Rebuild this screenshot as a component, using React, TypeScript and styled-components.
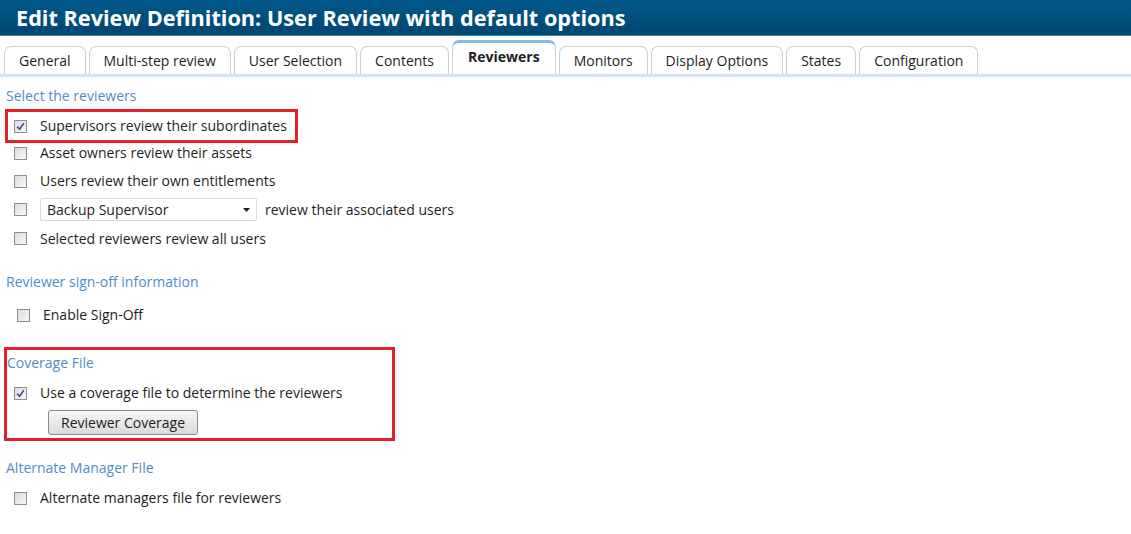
import styled, { createGlobalStyle } from 'styled-components'

const GlobalStyle = createGlobalStyle`
  html, body {
    margin: 0;
    padding: 0;
    background: #ffffff;
  }
  body {
    font-family: 'Open Sans', 'Liberation Sans', Arial, sans-serif;
    font-size: 14px;
    color: #1e1e1e;
  }
  * { box-sizing: border-box; }
`

const tabs = [
  'General',
  'Multi-step review',
  'User Selection',
  'Contents',
  'Reviewers',
  'Monitors',
  'Display Options',
  'States',
  'Configuration',
]

export default function App() {
  return (
    <Wrapper>
      <GlobalStyle />
      <Header>
        <Title>Edit Review Definition: User Review with default options</Title>
      </Header>

      <TabBar>
        {tabs.map((t) => (
          <Tab key={t} $active={t === 'Reviewers'}>
            {t}
          </Tab>
        ))}
      </TabBar>

      <Content>
        <Heading $top={9}>Select the reviewers</Heading>
        <Highlight $top={3} $width={293}>
          <Row $indent={6}>
            <Checkbox checked />
            <Label>Supervisors review their subordinates</Label>
          </Row>
        </Highlight>
        <Row $indent={8}>
          <Checkbox />
          <Label>Asset owners review their assets</Label>
        </Row>
        <Row $indent={8}>
          <Checkbox />
          <Label>Users review their own entitlements</Label>
        </Row>
        <Row $indent={8} $height={29}>
          <Checkbox />
          <Select>
            <span>Backup Supervisor</span>
            <Caret />
          </Select>
          <Label>review their associated users</Label>
        </Row>
        <Row $indent={8} $height={29}>
          <Checkbox />
          <Label>Selected reviewers review all users</Label>
        </Row>

        <Heading $top={19}>Reviewer sign-off information</Heading>
        <Row $indent={11} $top={9}>
          <Checkbox />
          <Label>Enable Sign-Off</Label>
        </Row>

        <Highlight $top={18} $width={391} $shift={-2}>
          <Heading $top={3}>Coverage File</Heading>
          <Row $indent={7} $top={6}>
            <Checkbox checked />
            <Label>Use a coverage file to determine the reviewers</Label>
          </Row>
          <ButtonRow>
            <Button>Reviewer Coverage</Button>
          </ButtonRow>
        </Highlight>

        <Heading $top={21}>Alternate Manager File</Heading>
        <Row $indent={8} $top={6}>
          <Checkbox />
          <Label>Alternate managers file for reviewers</Label>
        </Row>
      </Content>
    </Wrapper>
  )
}

function Checkbox({ checked = false }: { checked?: boolean }) {
  return (
    <Box>
      {checked && (
        <svg width="9" height="9" viewBox="0 0 9 9">
          <path d="M1.2 4.6 L3.6 7.2 L7.8 1.2" fill="none" stroke="#3d4f9a" strokeWidth="1.6" />
        </svg>
      )}
    </Box>
  )
}

function Caret() {
  return (
    <svg width="7" height="4" viewBox="0 0 7 4">
      <path d="M0 0 H7 L3.5 4 Z" fill="#222" />
    </svg>
  )
}

const Wrapper = styled.div`
  width: 1131px;
  min-height: 534px;
`

const Header = styled.div`
  height: 36px;
  padding-left: 16px;
  display: flex;
  align-items: center;
  background: linear-gradient(#00598b, #004670);
  border-bottom: 1px solid #2a93b8;
`

const Title = styled.h1`
  margin: 0;
  font-size: 21.7px;
  font-weight: 700;
  color: #ffffff;
  line-height: 28px;
  letter-spacing: 0;
`

const TabBar = styled.div`
  display: flex;
  align-items: flex-end;
  gap: 3px;
  height: 41px;
  padding-left: 4px;
  border-bottom: 3px solid #d4e4f4;
`

const Tab = styled.div<{ $active?: boolean }>`
  height: ${(p) => (p.$active ? 34 : 28)}px;
  padding: 0 14px;
  display: flex;
  align-items: center;
  justify-content: center;
  border: 1px solid #cfcfcf;
  border-bottom: none;
  border-radius: 7px 7px 0 0;
  background: #ffffff;
  font-size: 14px;
  color: #1e1e1e;
  font-weight: ${(p) => (p.$active ? 700 : 400)};
  ${(p) =>
    p.$active &&
    `
    padding: 4px 15px 0;
    border-top: 3px solid #86bde3;
    align-items: flex-start;
  `}
`

const Content = styled.div`
  display: flex;
  flex-direction: column;
  align-items: flex-start;
  padding-left: 6px;
`

const Heading = styled.div<{ $top?: number }>`
  margin-top: ${(p) => p.$top ?? 0}px;
  line-height: 20px;
  height: 20px;
  font-size: 14px;
  color: #4f8dc8;
`

const Highlight = styled.div<{ $top?: number; $width: number; $shift?: number }>`
  margin-top: ${(p) => p.$top ?? 0}px;
  margin-left: ${(p) => p.$shift ?? -1}px;
  margin-bottom: -4px;
  width: ${(p) => p.$width}px;
  border: 3px solid #e3202a;
  display: flex;
  flex-direction: column;
  align-items: flex-start;
`

const Row = styled.div<{ $indent?: number; $top?: number; $height?: number }>`
  display: flex;
  align-items: center;
  height: ${(p) => p.$height ?? 28}px;
  margin-top: ${(p) => p.$top ?? 0}px;
  padding-left: ${(p) => p.$indent ?? 8}px;
  gap: 13px;
`

const Box = styled.span`
  width: 13px;
  height: 13px;
  flex: none;
  display: inline-flex;
  align-items: center;
  justify-content: center;
  border: 1px solid #8f8f8f;
  background: linear-gradient(135deg, #dcdcdc, #f8f8f8);
`

const Label = styled.span`
  font-size: 14px;
  color: #1e1e1e;
  white-space: nowrap;
  line-height: 20px;
`

const Select = styled.div`
  width: 217px;
  height: 23px;
  margin-right: -5px;
  display: flex;
  align-items: center;
  justify-content: space-between;
  padding: 0 6px;
  border: 1px solid #dadada;
  border-radius: 2px;
  background: #ffffff;
  font-size: 14px;
  color: #1e1e1e;
`

const ButtonRow = styled.div`
  padding-left: 41px;
  padding-bottom: 3px;
  margin-top: 3px;
`

const Button = styled.button`
  width: 150px;
  height: 25px;
  padding: 0;
  border: 1px solid #8a8a8a;
  border-radius: 3px;
  background: linear-gradient(#f7f7f7, #dadada);
  font-family: 'Open Sans', 'Liberation Sans', Arial, sans-serif;
  font-size: 14px;
  color: #1e1e1e;
`
